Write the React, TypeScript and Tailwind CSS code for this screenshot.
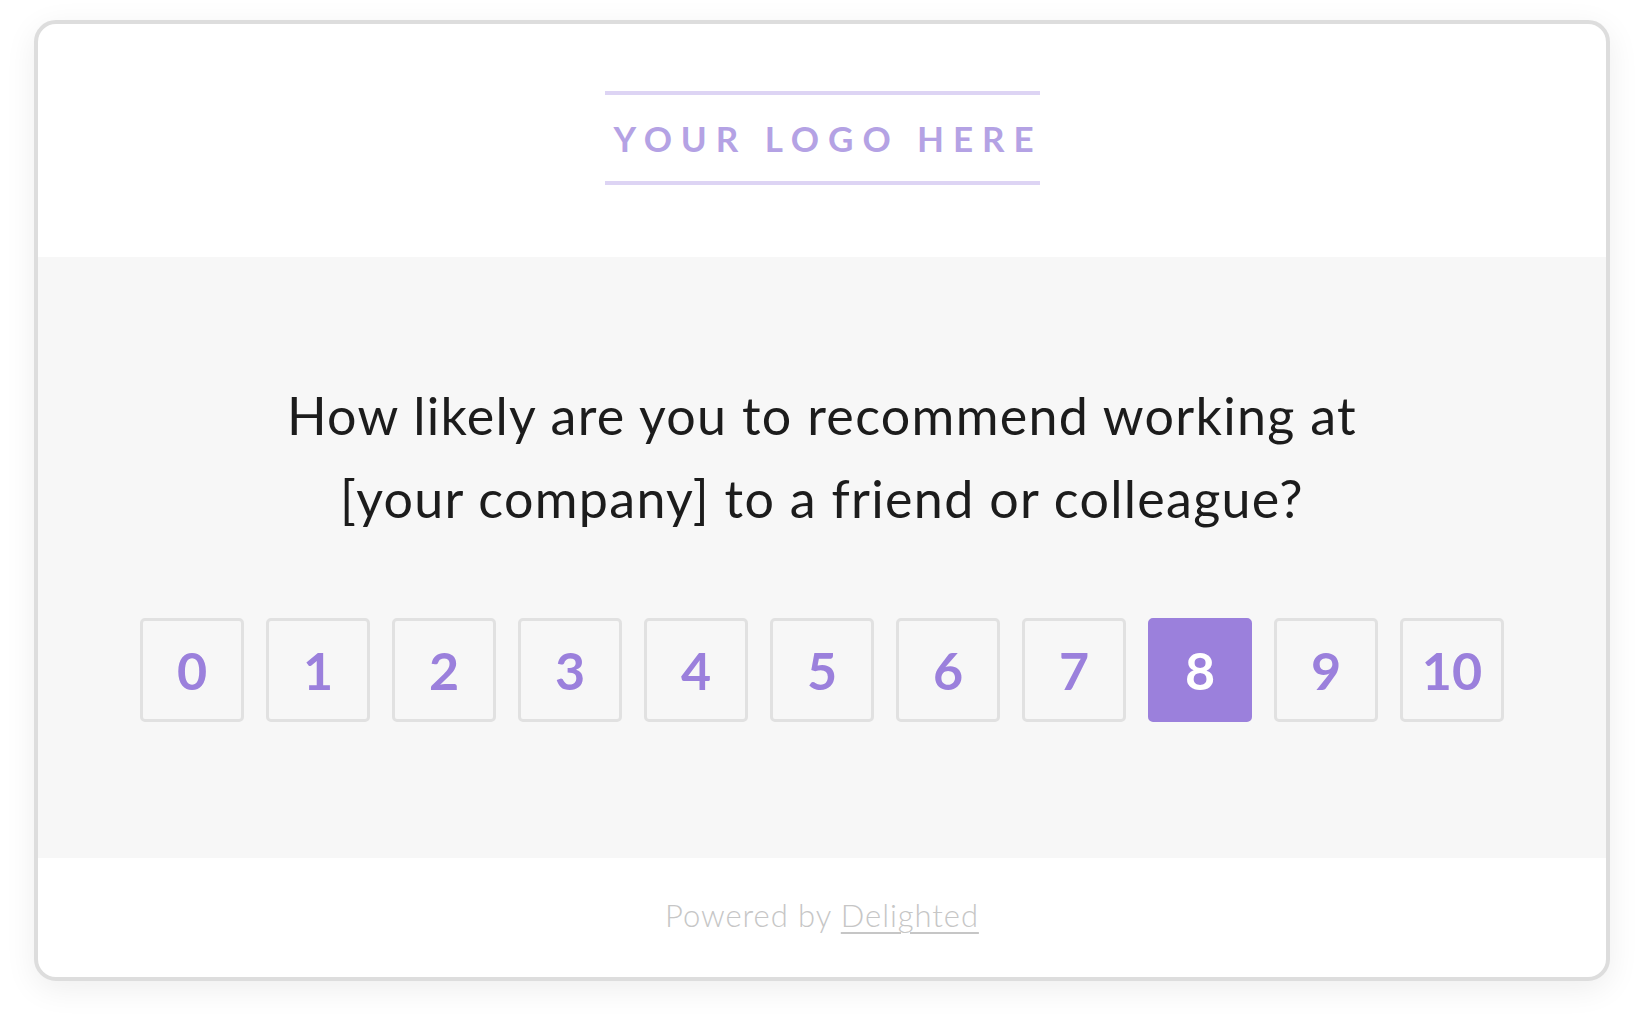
import React from 'react';

const scores = [0, 1, 2, 3, 4, 5, 6, 7, 8, 9, 10];
const selected = 8;

export default function App(): JSX.Element {
  return (
    <div className="min-h-[1016px] bg-white px-[34px] pt-[20px]" style={{ fontFamily: 'Lato, "Noto Sans", sans-serif' }}>
      <div className="flex w-[1576px] flex-col overflow-hidden rounded-[22px] border-4 border-[#dddddd] bg-white shadow-[0_8px_32px_rgba(0,0,0,0.07)]">
        <header className="flex h-[233px] items-start justify-center pt-[67px]">
          <div className="flex h-[94px] w-[435px] items-center justify-center border-y-4 border-[#ddd4f4]">
            <span className="whitespace-nowrap pl-[12px] text-[35px] font-bold leading-none tracking-[0.255em] text-[#b4a2e4]">YOUR LOGO HERE</span>
          </div>
        </header>

        <main className="flex flex-col items-center bg-[#f7f7f7] pt-[117px] pb-[136px]">
          <h1 className="text-center text-[52px] font-normal leading-[83px] tracking-[0.025em] text-[#1c1c1c]">
            How likely are you to recommend working at
            <br />
            [your company] to a friend or colleague?
          </h1>
          <div className="mt-[78px] flex gap-[22px]">
            {scores.map((score) =>
              score === selected ? (
                <button
                  key={score}
                  className="flex h-[104px] w-[104px] items-center justify-center rounded-[5px] border-4 border-[#9b80dc] bg-[#9b80dc] text-[52px] font-bold leading-none text-white"
                >
                  {score}
                </button>
              ) : (
                <button
                  key={score}
                  className="flex h-[104px] w-[104px] items-center justify-center rounded-[5px] border-[3px] border-[#e1e1e1] bg-[#f7f7f7] text-[52px] font-bold leading-none text-[#9b80dc]"
                >
                  {score}
                </button>
              ),
            )}
          </div>
        </main>

        <footer className="flex h-[119px] justify-center pt-[42px]">
          <p className="text-[31px] font-light leading-none tracking-[0.03em] text-[#c6c6c6]">
            Powered by <a className="underline decoration-[2px] underline-offset-[5px]">Delighted</a>
          </p>
        </footer>
      </div>
    </div>
  );
}
